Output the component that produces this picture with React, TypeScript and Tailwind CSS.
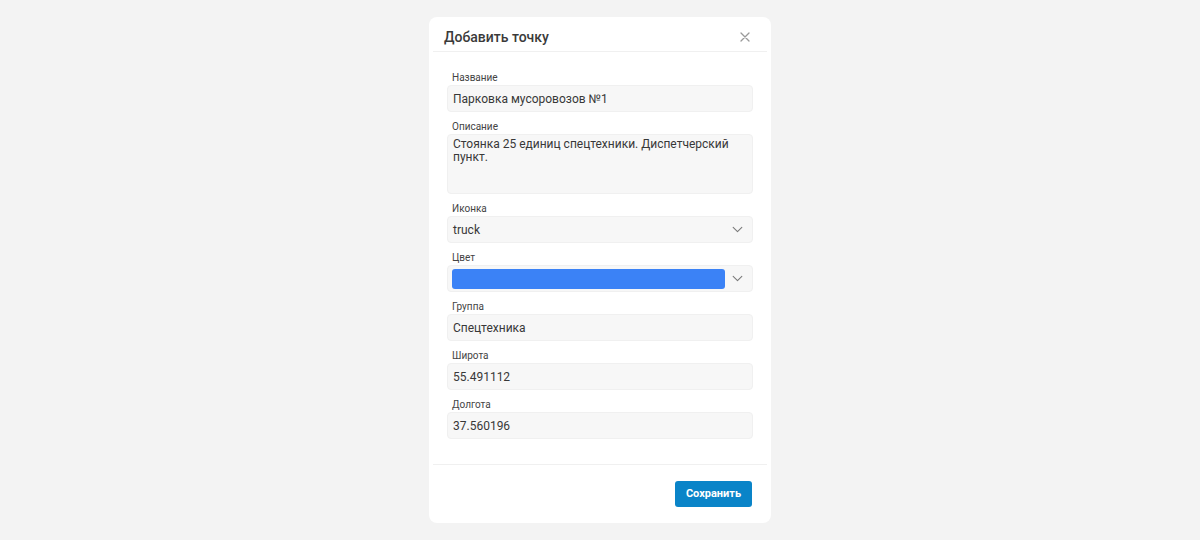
import React from "react";

const font = { fontFamily: "Roboto, 'Noto Sans', sans-serif" };

const Chevron = () => (
  <svg width="13" height="13" viewBox="0 0 24 24" fill="none" stroke="#7a7a7a" strokeWidth="2" strokeLinecap="round" strokeLinejoin="round">
    <path d="m4 8 8 8 8-8" />
  </svg>
);

const Field = ({ label, children }: { label: string; children: React.ReactNode }) => (
  <div className="flex flex-col">
    <span className="text-[10px] leading-[12px] text-[#444] pl-[5px] mb-[1px]">{label}</span>
    {children}
  </div>
);

const TextInput = ({ value }: { value: string }) => (
  <div className="h-[27px] flex items-center px-[5px] bg-[#f7f7f7] border border-[#f0f0f0] rounded-[4px] text-[12px] text-[#383838]">
    {value}
  </div>
);

const App = () => {
  return (
    <div className="w-[1200px] h-[540px] bg-[#f3f3f3] flex justify-center pt-[17px]" style={font}>
      <div className="w-[342px] h-[506px] bg-white rounded-[8px] flex flex-col">
        {/* HEADER */}
        <div className="flex justify-between items-center pl-[11px] pr-[17px] pt-[11px] pb-[5px] mx-[4px] border-b border-[#f0f0f0]">
          <span className="text-[14px] leading-[18px] font-medium text-[#3a3a3a]">Добавить точку</span>
          <svg width="10" height="10" viewBox="0 0 10 10" stroke="#9a9a9a" strokeWidth="1.3" strokeLinecap="round">
            <path d="M1 1l8 8M9 1l-8 8" />
          </svg>
        </div>
        {/* FORM */}
        <div className="flex flex-col gap-[9px] px-[18px] pt-[20px] pb-[25px]">
          <Field label="Название">
            <TextInput value="Парковка мусоровозов №1" />
          </Field>
          <Field label="Описание">
            <div className="h-[60px] px-[5px] pt-[3px] bg-[#f7f7f7] border border-[#f0f0f0] rounded-[4px] text-[12px] leading-[13px] text-[#383838]">
              Стоянка 25 единиц спецтехники. Диспетчерский пункт.
            </div>
          </Field>
          <Field label="Иконка">
            <div className="h-[27px] flex items-center justify-between pl-[5px] pr-[8px] bg-[#f7f7f7] border border-[#f0f0f0] rounded-[4px] text-[12px] text-[#383838]">
              <span>truck</span>
              <Chevron />
            </div>
          </Field>
          <Field label="Цвет">
            <div className="h-[27px] flex items-center justify-between pl-[4px] pr-[8px] bg-[#f7f7f7] border border-[#f0f0f0] rounded-[4px]">
              <div className="w-[273px] h-[20px] bg-[#3b82f6] rounded-[3px]" />
              <Chevron />
            </div>
          </Field>
          <Field label="Группа">
            <TextInput value="Спецтехника" />
          </Field>
          <Field label="Широта">
            <TextInput value="55.491112" />
          </Field>
          <Field label="Долгота">
            <TextInput value="37.560196" />
          </Field>
        </div>
        {/* FOOTER */}
        <div className="flex justify-end mx-[4px] pr-[15px] pt-[16px] border-t border-[#f0f0f0]">
          <button className="w-[77px] h-[26px] bg-[#0a84c8] rounded-[3px] text-white text-[11px] font-bold">
            Сохранить
          </button>
        </div>
      </div>
    </div>
  );
};

export default App;
